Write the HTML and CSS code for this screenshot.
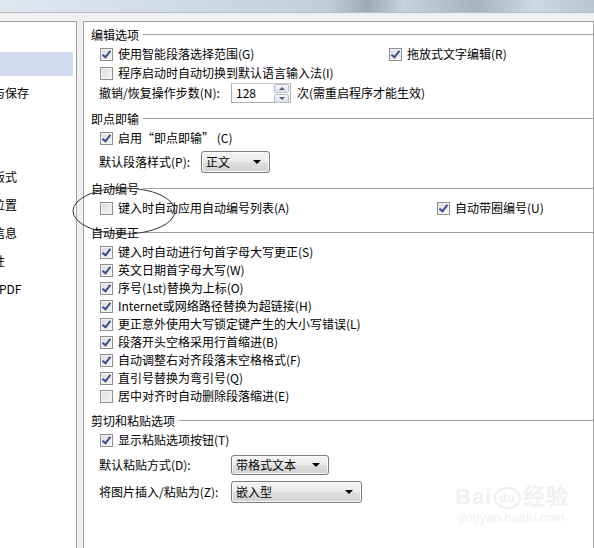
FILE: index.html
```html
<!DOCTYPE html>
<html lang="zh-CN">

<head>
    <meta charset="UTF-8">
    <meta name="viewport" content="width=device-width, initial-scale=1.0">
    <title>选项 - 编辑</title>
    <link rel="stylesheet" href="styles.css">
</head>

<body>
    <div class="titlebar"></div>

    <div class="dialog">
        <ul class="nav">
            <li><span>视图</span></li>
            <li class="active"><span>编辑</span></li>
            <li><span>常规与保存</span></li>
            <li><span>修订</span></li>
            <li><span>打印</span></li>
            <li><span>中文版式</span></li>
            <li><span>文件位置</span></li>
            <li><span>用户信息</span></li>
            <li><span>兼容性</span></li>
            <li><span class="latin">输出PDF</span></li>
        </ul>

        <div class="options">
            <div class="group-title first">编辑选项</div>
            <div class="row">
                <label class="check col-a"><i class="box on"></i>使用智能段落选择范围(G)</label>
                <label class="check"><i class="box on"></i>拖放式文字编辑(R)</label>
            </div>
            <div class="row">
                <label class="check"><i class="box"></i>程序启动时自动切换到默认语言输入法(I)</label>
            </div>
            <div class="row field-row">
                <span class="field-label wide">撤销/恢复操作步数(N):</span>
                <div class="spin">
                    <span class="spin-value">128</span>
                    <div class="spin-buttons">
                        <span class="spin-btn up"></span>
                        <span class="spin-btn down"></span>
                    </div>
                </div>
                <span class="after-spin">次(需重启程序才能生效)</span>
            </div>

            <div class="group-title">即点即输</div>
            <div class="row">
                <label class="check"><i class="box on"></i>启用“即点即输” (C)</label>
            </div>
            <div class="row select-row">
                <span class="field-label narrow">默认段落样式(P):</span>
                <div class="select style-select">正文<span class="arrow"></span></div>
            </div>

            <div class="group-title">自动编号</div>
            <div class="row">
                <label class="check col-b"><i class="box"></i>键入时自动应用自动编号列表(A)</label>
                <label class="check"><i class="box on"></i>自动带圈编号(U)</label>
            </div>

            <div class="group-title">自动更正</div>
            <div class="stack">
                <div class="row"><label class="check"><i class="box on"></i>键入时自动进行句首字母大写更正(S)</label></div>
                <div class="row"><label class="check"><i class="box on"></i>英文日期首字母大写(W)</label></div>
                <div class="row"><label class="check"><i class="box on"></i>序号(1st)替换为上标(O)</label></div>
                <div class="row"><label class="check"><i class="box on"></i>Internet或网络路径替换为超链接(H)</label></div>
                <div class="row"><label class="check"><i class="box on"></i>更正意外使用大写锁定键产生的大小写错误(L)</label></div>
                <div class="row"><label class="check"><i class="box on"></i>段落开头空格采用行首缩进(B)</label></div>
                <div class="row"><label class="check"><i class="box on"></i>自动调整右对齐段落末空格格式(F)</label></div>
                <div class="row"><label class="check"><i class="box on"></i>直引号替换为弯引号(Q)</label></div>
                <div class="row"><label class="check"><i class="box"></i>居中对齐时自动删除段落缩进(E)</label></div>
            </div>

            <div class="group-title">剪切和粘贴选项</div>
            <div class="row">
                <label class="check"><i class="box on"></i>显示粘贴选项按钮(T)</label>
            </div>
            <div class="row select-row low">
                <span class="field-label wide">默认粘贴方式(D):</span>
                <div class="select paste-select">带格式文本<span class="arrow"></span></div>
            </div>
            <div class="row select-row">
                <span class="field-label wide">将图片插入/粘贴为(Z):</span>
                <div class="select picture-select">嵌入型<span class="arrow"></span></div>
            </div>
        </div>
    </div>

    <!-- hand-drawn circle around the numbering option -->
    <svg class="mark" width="108" height="52" viewBox="0 0 108 52">
        <ellipse cx="53" cy="25" rx="51" ry="23" fill="none" stroke="#333" stroke-width="1" />
    </svg>

    <div class="watermark">
        <div class="wm-logo">Bai<span class="wm-du">du</span>经验</div>
        <div class="wm-url">jingyan.baidu.com</div>
    </div>
</body>

</html>
```

FILE: styles.css
```css
body {
    margin: 0;
    width: 594px;
    height: 548px;
    overflow: hidden;
    position: relative;
    background: #f0f0f0;
    font-family: "Noto Sans CJK SC", "Liberation Sans", sans-serif;
    font-size: 12px;
    color: #000;
}

.titlebar {
    height: 12px;
    border-bottom: 1px solid #b4bcc6;
    background: linear-gradient(90deg, #dfe8f1 0%, #cfdbe7 30%, #c2ceda 55%, #9eaab6 62%, #c6d2de 68%, #a7b3bf 80%, #ccd8e4 90%, #b9c5d1 100%);
}

.dialog {
    display: flex;
    margin-top: 8px;
    height: 527px;
}

/* left category list */
.nav {
    list-style: none;
    margin: 0;
    padding: 0;
    width: 76px;
    background: #fff;
    border-top: 1px solid #a0a0a0;
    border-right: 1px solid #a0a0a0;
    overflow: hidden;
}

.nav li {
    height: 28px;
    display: flex;
    align-items: center;
    white-space: nowrap;
}

.nav li span {
    margin-left: -31px;
}

.nav li span.latin {
    margin-left: -25px;
}

.nav li.active {
    background: #d1dcee;
    height: 24px;
    margin: 2px 3px 2px 0;
}

/* right options panel */
.options {
    margin-left: 6px;
    flex: 1;
    background: #fff;
    border-top: 1px solid #a0a0a0;
    border-left: 1px solid #a0a0a0;
    border-right: 1px solid #a0a0a0;
    padding: 3px 0 0 0;
}

.group-title {
    display: flex;
    align-items: center;
    height: 18px;
    margin-top: 6px;
    padding-left: 7px;
    white-space: nowrap;
}

.group-title.first {
    margin-top: 0;
}

.group-title::after {
    content: "";
    flex: 1;
    border-top: 1px solid #a0a0a0;
    margin-left: 4px;
}

.row {
    display: flex;
    align-items: center;
    height: 18px;
    margin-top: 1px;
    padding-left: 16px;
    white-space: nowrap;
    line-height: 18px;
}

.group-title + .row {
    margin-top: 2px;
}

.stack {
    margin-top: 2px;
}

.stack .row {
    margin-top: 0;
}

.check {
    display: flex;
    align-items: center;
}

.col-a {
    width: 289px;
}

.col-b {
    width: 337px;
}

.box {
    position: relative;
    width: 11px;
    height: 11px;
    border: 1px solid #8f8f8f;
    background: linear-gradient(135deg, #dcdcdc, #f6f6f6);
    margin-right: 5px;
    box-shadow: inset 0 0 0 1px #f4f4f4;
}

.box.on::after {
    content: "";
    position: absolute;
    left: 3px;
    top: 0px;
    width: 3px;
    height: 7px;
    border-right: 2px solid #3a4c8f;
    border-bottom: 2px solid #3a4c8f;
    transform: rotate(38deg);
}

/* label + control rows */
.field-row {
    height: 20px;
    padding-left: 15px;
}

.select-row {
    height: 22px;
    margin-top: 4px;
    padding-left: 15px;
}

.select-row + .select-row {
    margin-top: 6px;
}

.select-row.low {
    height: 20px;
    margin-top: 6px;
}

.field-label.wide {
    width: 132px;
}

.field-label.narrow {
    width: 102px;
}

.spin {
    display: flex;
    align-items: center;
    justify-content: space-between;
    height: 18px;
    width: 54px;
    border: 1px solid #abadb3;
    border-top-color: #c5c7cc;
    padding-left: 4px;
}

.spin-buttons {
    display: flex;
    flex-direction: column;
    gap: 1px;
    margin-right: 1px;
}

.spin-btn {
    position: relative;
    width: 13px;
    height: 7px;
    border: 1px solid #b8bcc4;
    border-radius: 2px;
    background: linear-gradient(#f4f6fa, #dde3ec);
}

.spin-btn::after {
    content: "";
    position: absolute;
    left: 4px;
    width: 0;
    height: 0;
    border-left: 3px solid transparent;
    border-right: 3px solid transparent;
}

.spin-btn.up::after {
    top: 2px;
    border-bottom: 3px solid #4a5a80;
}

.spin-btn.down::after {
    top: 2px;
    border-top: 3px solid #4a5a80;
}

.after-spin {
    margin-left: 6px;
}

.select {
    display: flex;
    align-items: center;
    justify-content: space-between;
    height: 100%;
    box-sizing: border-box;
    border: 1px solid #7a7a7a;
    border-radius: 3px;
    padding-left: 4px;
    background: linear-gradient(#f4f4f4 0%, #ececec 48%, #dedede 52%, #d2d2d2 100%);
    box-shadow: inset 0 0 0 1px #fbfbfb;
}

.style-select {
    width: 69px;
}

.paste-select {
    width: 98px;
}

.picture-select {
    width: 131px;
}

.arrow {
    width: 0;
    height: 0;
    border-left: 4px solid transparent;
    border-right: 4px solid transparent;
    border-top: 4px solid #000;
    margin-right: 8px;
}

/* overlays */
.mark {
    position: absolute;
    left: 71px;
    top: 186px;
}

.watermark {
    position: absolute;
    left: 455px;
    top: 484px;
    color: #f0f0f0;
    font-family: "Liberation Sans", sans-serif;
    text-align: center;
}

.wm-logo {
    font-size: 22px;
    font-weight: bold;
    line-height: 26px;
    letter-spacing: 1px;
}

.wm-du {
    display: inline-block;
    font-size: 12px;
    line-height: 18px;
    padding: 0 3px;
    margin: 0 2px;
    border: 2px solid #f0f0f0;
    border-radius: 50%;
    vertical-align: middle;
}

.wm-url {
    font-size: 13px;
    line-height: 16px;
}
```
